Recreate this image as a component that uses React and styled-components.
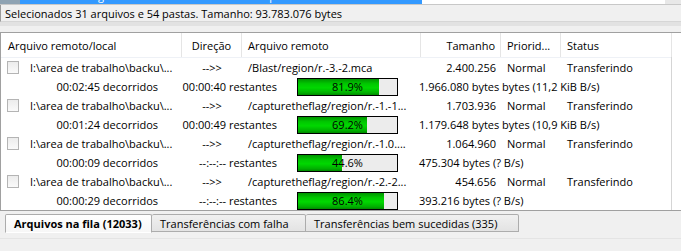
import React from "react";
import styled, { createGlobalStyle } from "styled-components";

const GlobalStyle = createGlobalStyle`
  body {
    margin: 0;
    background: #f0f0f0;
    font-family: "Open Sans", "Liberation Sans", sans-serif;
    font-size: 11px;
    color: #000;
  }
  * { box-sizing: border-box; }
`;

const Page = styled.div`
  width: 681px;
  height: 251px;
  overflow: hidden;
  display: flex;
  flex-direction: column;
`;

const TopStrip = styled.div`
  height: 5px;
  overflow: hidden;
  background: #fff;
  border-bottom: 1px solid #c8c8c8;
`;

const TopRow = styled.div`
  margin-top: -14px;
  height: 19px;
  display: flex;
  align-items: center;
`;

const FileIcon = styled.div`
  width: 20px;
  height: 19px;
  background: #8fa3b3;
`;

const SelectedCell = styled.div`
  width: 402px;
  height: 19px;
  background: #3399ff;
  color: #fff;
  display: flex;
  align-items: center;
  gap: 0;
  span { white-space: nowrap; }
`;

const ScrollGutter = styled.div`
  margin-left: auto;
  width: 16px;
  height: 19px;
  background: #e8e8e8;
`;

const StatusBar = styled.div`
  height: 17px;
  padding-left: 4px;
  display: flex;
  align-items: center;
  border-left: 1px solid #9a9a9a;
  border-bottom: 1px solid #d6d6d6;
  white-space: nowrap;
`;

const Splitter = styled.div`
  height: 11px;
  background: linear-gradient(#e2e2e2 0 4px, #f0f0f0 4px);
  border-bottom: 1px solid #a0a0a0;
`;

const ListPanel = styled.div`
  display: flex;
  height: 178px;
  background: #fff;
  border-left: 1px solid #a0a0a0;
  border-bottom: 1px solid #a0a0a0;
`;

const Table = styled.div`
  width: 671px;
  border-right: 1px solid #d5d5d5;
`;

const cols = "181px 60px 179px 80px 60px 111px";

const HeaderRow = styled.div`
  display: grid;
  grid-template-columns: ${cols};
  height: 25px;
  border-bottom: 1px solid #eef1f6;
`;

const HeaderCell = styled.div`
  display: flex;
  align-items: center;
  justify-content: ${(p) => p.$align || "flex-start"};
  padding: 0 ${(p) => (p.$align === "flex-end" ? "5px" : "0")} 0
    ${(p) => (p.$align ? "0" : "6px")};
  border-right: 1px solid #e5e5e5;
  white-space: nowrap;
`;

const Row = styled.div`
  display: grid;
  grid-template-columns: ${cols};
  height: 19px;
  align-items: center;
  white-space: nowrap;
`;

const Cell = styled.div`
  display: flex;
  align-items: center;
  justify-content: ${(p) => p.$align || "flex-start"};
  padding-left: ${(p) => (p.$align ? "0" : "6px")};
  padding-right: ${(p) => (p.$align === "flex-end" ? "5px" : "0")};
  overflow: hidden;
`;

const Check = styled.span`
  width: 12px;
  height: 13px;
  margin-right: 11px;
  border: 1px solid #b4b4b4;
  background: linear-gradient(#ececec, #fafafa);
  flex: none;
`;

const SubRow = styled.div`
  display: flex;
  height: 19px;
  align-items: center;
  white-space: nowrap;
`;

const Timing = styled.span`
  width: ${(p) => p.$w}px;
  text-align: right;
  flex: none;
`;

const Bar = styled.div`
  position: relative;
  margin-left: 20px;
  width: 101px;
  height: 18px;
  border: 1px solid #000;
  background: #ececec;
  flex: none;
`;

const Fill = styled.div`
  height: 100%;
  background: linear-gradient(#009400 0%, #00c800 30%, #00d800 55%, #00b000 85%, #008a00 100%);
`;

const BarLabel = styled.span`
  position: absolute;
  inset: 0;
  display: flex;
  align-items: center;
  justify-content: center;
`;

const Bytes = styled.span`
  margin-left: 21px;
`;

const Gap = styled.div`
  height: 3px;
`;

const TabBar = styled.div`
  display: flex;
  padding-left: 5px;
  height: 19px;
`;

const Tab = styled.div`
  height: ${(p) => (p.$active ? "19px" : "18px")};
  padding: 0 8px;
  display: flex;
  align-items: center;
  border: 1px solid #acacac;
  border-left-width: ${(p) => (p.$first ? "1px" : "0")};
  border-bottom-color: ${(p) => (p.$active ? "#ffffff" : "#acacac")};
  border-radius: 2px 2px 0 0;
  background: ${(p) =>
    p.$active ? "linear-gradient(#ffffff, #f7f7f7)" : "linear-gradient(#f0f0f0, #e3e3e3)"};
  font-weight: ${(p) => (p.$active ? 700 : 400)};
  width: ${(p) => p.$w}px;
  white-space: nowrap;
`;

const TabBody = styled.div`
  flex: 1;
  background: linear-gradient(#f0f0f0 0 5px, #e4e4e4 5px 6px, #f0f0f0 6px);
`;

const transfers = [
  {
    remote: "/Blast/region/r.-3.-2.mca",
    size: "2.400.256",
    elapsed: "00:02:45",
    left: "00:00:40",
    pct: 81.9,
    bytes: "1.966.080 bytes bytes (11,2 KiB B/s)",
  },
  {
    remote: "/capturetheflag/region/r.-1.-1...",
    size: "1.703.936",
    elapsed: "00:01:24",
    left: "00:00:49",
    pct: 69.2,
    bytes: "1.179.648 bytes bytes (10,9 KiB B/s)",
  },
  {
    remote: "/capturetheflag/region/r.-1.0....",
    size: "1.064.960",
    elapsed: "00:00:09",
    left: "--:--:--",
    pct: 44.6,
    bytes: "475.304 bytes (? B/s)",
  },
  {
    remote: "/capturetheflag/region/r.-2.-2...",
    size: "454.656",
    elapsed: "00:00:29",
    left: "--:--:--",
    pct: 86.4,
    bytes: "393.216 bytes (? B/s)",
  },
];

const App = () => {
  return (
    <Page>
      <GlobalStyle />
      <TopStrip>
        <TopRow>
          <FileIcon />
          <SelectedCell>
            <span style={{ marginLeft: 4, width: 184 }}>CentralDbMinig</span>
            <span style={{ width: 92 }}>Pasta de arqu...</span>
            <span>25/08/2014 16:44:49</span>
          </SelectedCell>
          <ScrollGutter />
        </TopRow>
      </TopStrip>
      <StatusBar>Selecionados 31 arquivos e 54 pastas. Tamanho: 93.783.076 bytes</StatusBar>
      <Splitter />
      <ListPanel>
        <Table>
          <HeaderRow>
            <HeaderCell style={{ paddingLeft: 7 }}>Arquivo remoto/local</HeaderCell>
            <HeaderCell $align="center">Direção</HeaderCell>
            <HeaderCell>Arquivo remoto</HeaderCell>
            <HeaderCell $align="flex-end">Tamanho</HeaderCell>
            <HeaderCell>Priorid...</HeaderCell>
            <HeaderCell>Status</HeaderCell>
          </HeaderRow>
          {transfers.map((t, i) => (
            <React.Fragment key={i}>
              <Row>
                <Cell>
                  <Check />
                  I:\area de trabalho\backu\...
                </Cell>
                <Cell $align="center">--&gt;&gt;</Cell>
                <Cell>{t.remote}</Cell>
                <Cell $align="flex-end">{t.size}</Cell>
                <Cell>Normal</Cell>
                <Cell>Transferindo</Cell>
              </Row>
              <SubRow>
                <Timing $w={157}>{t.elapsed} decorridos</Timing>
                <Timing $w={119}>{t.left} restantes</Timing>
                <Bar>
                  <Fill style={{ width: `${t.pct}%` }} />
                  <BarLabel>{t.pct}%</BarLabel>
                </Bar>
                <Bytes>{t.bytes}</Bytes>
              </SubRow>
            </React.Fragment>
          ))}
        </Table>
      </ListPanel>
      <Gap />
      <TabBar>
        <Tab $active $first $w={147}>Arquivos na fila (12033)</Tab>
        <Tab $w={154}>Transferências com falha</Tab>
        <Tab $w={213}>Transferências bem sucedidas (335)</Tab>
      </TabBar>
      <TabBody />
    </Page>
  );
};

export default App;
